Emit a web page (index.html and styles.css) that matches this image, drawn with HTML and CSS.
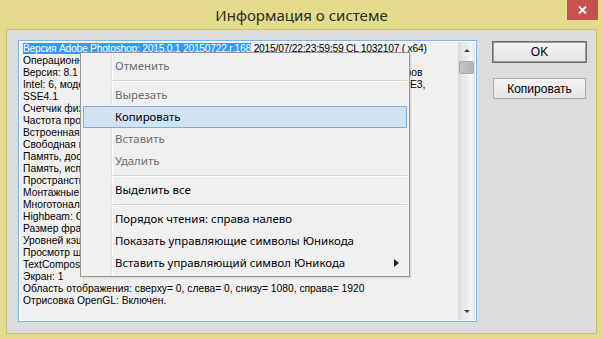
FILE: index.html
```html
<!DOCTYPE html>
<html lang="ru">
<head>
    <meta charset="UTF-8">
    <title>Информация о системе</title>
    <link rel="stylesheet" href="styles.css">
</head>
<body>
    <div class="window">
        <div class="titlebar">
            <span class="title">Информация о системе</span>
            <div class="close-btn">
                <svg width="9" height="8" viewBox="0 0 9 8"><path d="M1 0.5 L8 7.5 M8 0.5 L1 7.5" stroke="#fff" stroke-width="1.8"/></svg>
            </div>
        </div>

        <div class="client">
            <!-- Info text box -->
            <div class="infobox">
                <div class="info-text">
                    <div class="line line-tight"><span class="sel">Версия Adobe Photoshop: 2015.0.1 20150722.r.168</span> 2015/07/22:23:59:59 CL 1032107 ( x64)</div>
                    <div class="line">Операционная система: Windows 8 64-разрядная</div>
                    <div class="line">Версия: 8.1 Сведения о системе: GenuineIntel, количество логических процессоров</div>
                    <div class="line">Intel: 6, модель: 58, степпинг: 9 с MMX, SSE (целочисленные), SSE FP, SSE2, SSE3,</div>
                    <div class="line">SSE4.1</div>
                    <div class="line">Счетчик физических процессоров: 4</div>
                    <div class="line">Частота процессора: 3400 МГц</div>
                    <div class="line">Встроенная память: 16335 МБ</div>
                    <div class="line">Свободная память: 11228 МБ</div>
                    <div class="line">Память, доступная для Photoshop: 14663 МБ</div>
                    <div class="line">Память, используемая Photoshop: 70 %</div>
                    <div class="line">Пространство: Отключено.</div>
                    <div class="line">Монтажные области: Включено.</div>
                    <div class="line">Многотональный шум: Отключено.</div>
                    <div class="line">Highbeam: Отключено.</div>
                    <div class="line">Размер фрагмента изображения: 1024K</div>
                    <div class="line">Уровней кэша изображения: 4</div>
                    <div class="line">Просмотр шрифтов: Средний</div>
                    <div class="line">TextComposer: Латинский</div>
                    <div class="line">Экран: 1</div>
                    <div class="line">Область отображения: сверху= 0, слева= 0, снизу= 1080, справа= 1920</div>
                    <div class="line">Отрисовка OpenGL: Включен.</div>
                </div>
                <div class="scrollbar">
                    <div class="sb-btn"><span class="arrow-up"></span></div>
                    <div class="sb-thumb"></div>
                    <div class="sb-track"></div>
                    <div class="sb-btn"><span class="arrow-down"></span></div>
                </div>
            </div>

            <div class="actions">
                <button class="btn btn-default">OK</button>
                <button class="btn btn-copy">Копировать</button>
            </div>
        </div>

        <!-- Context menu -->
        <ul class="context-menu">
            <li class="menu-item disabled">Отменить</li>
            <li class="menu-sep"></li>
            <li class="menu-item disabled">Вырезать</li>
            <li class="menu-item active">Копировать</li>
            <li class="menu-item disabled">Вставить</li>
            <li class="menu-item disabled">Удалить</li>
            <li class="menu-sep"></li>
            <li class="menu-item">Выделить все</li>
            <li class="menu-sep"></li>
            <li class="menu-item">Порядок чтения: справа налево</li>
            <li class="menu-item">Показать управляющие символы Юникода</li>
            <li class="menu-item">Вставить управляющий символ Юникода<span class="sub-arrow"></span></li>
        </ul>
    </div>
</body>
</html>
```

FILE: styles.css
```css
* {
    margin: 0;
    padding: 0;
    box-sizing: border-box;
}

body {
    width: 603px;
    height: 339px;
    overflow: hidden;
    background: #e4dc8c;
    font-family: 'Liberation Sans', Arial, sans-serif;
}

.window {
    position: relative;
    width: 603px;
    height: 339px;
    background: #e4dc8c;
    padding: 0 6px 5px;
    display: flex;
    flex-direction: column;
}

.titlebar {
    height: 29px;
    flex-shrink: 0;
    display: grid;
    grid-template-columns: 1fr auto 1fr;
}

.title {
    grid-column: 2;
    font-family: 'Noto Sans', sans-serif;
    font-size: 15px;
    line-height: 30px;
    color: #2b2b2b;
    white-space: nowrap;
}

.close-btn {
    grid-column: 3;
    justify-self: end;
    width: 31px;
    height: 20px;
    margin-right: -1px;
    background: #c75050;
    display: flex;
    align-items: center;
    justify-content: center;
}

.client {
    flex: 1;
    background: #dcdcdc;
    border: 1px solid #c9c17b;
    display: flex;
    align-items: flex-start;
    padding: 10px 0 0 11px;
}

.infobox {
    width: 459px;
    height: 282px;
    border: 1px solid #7eb4ea;
    background: #fff;
    padding: 1px;
    display: flex;
}

.info-text {
    flex: 1;
    background: #f0f0f0;
    padding: 1px 0 0 3px;
    overflow: hidden;
    font-size: 10.3px;
    line-height: 12px;
    color: #000;
    white-space: nowrap;
}

.line {
    height: 12px;
}

.line-tight {
    letter-spacing: -0.25px;
}

.sel {
    background: #3399ff;
    color: #fff;
}

.scrollbar {
    width: 17px;
    display: flex;
    flex-direction: column;
    background: linear-gradient(to right, #d6d6d6 0%, #e6e6e6 25%, #ececec 55%, #f7f7f7 75%, #e4e4e4 100%);
}

.sb-btn {
    height: 17px;
    display: flex;
    align-items: center;
    justify-content: center;
}

.arrow-up {
    width: 0;
    height: 0;
    border-left: 3px solid transparent;
    border-right: 3px solid transparent;
    border-bottom: 3px solid #444;
}

.arrow-down {
    width: 0;
    height: 0;
    border-left: 3px solid transparent;
    border-right: 3px solid transparent;
    border-top: 3px solid #444;
}

.sb-thumb {
    height: 13px;
    margin: 2px 1px 0;
    background: linear-gradient(to right, #c4c4c4, #b6b6b6);
    border: 1px solid #a9a9a9;
    border-radius: 2px;
}

.sb-track {
    flex: 1;
}

.actions {
    width: 95px;
    margin: 1px 0 0 15px;
    display: flex;
    flex-direction: column;
    align-items: center;
    gap: 15px;
}

.btn {
    font-family: 'Liberation Sans', Arial, sans-serif;
    font-size: 12px;
    color: #000;
    background: linear-gradient(#f4f4f4, #e4e4e4);
    border: 1px solid #acacac;
    border-radius: 0;
}

.btn-default {
    width: 95px;
    height: 22px;
    border-color: #6f6f6f;
    box-shadow: inset 0 0 0 1px #9a9a9a;
}

.btn-copy {
    width: 93px;
    height: 21px;
}

.context-menu {
    position: absolute;
    left: 80px;
    top: 52px;
    width: 330px;
    list-style: none;
    padding: 2px;
    border: 1px solid #979797;
    background: linear-gradient(to right, transparent 30px, #e2e3e3 30px, #e2e3e3 31px, #fff 31px, #fff 32px, transparent 32px), #f0f0f0;
    box-shadow: 1px 1px 2px rgba(0, 0, 0, 0.15);
    font-family: 'Noto Sans', sans-serif;
    font-size: 11.4px;
    color: #000;
}

.menu-item {
    height: 22px;
    line-height: 20px;
    padding-left: 31px;
    border: 1px solid transparent;
    display: flex;
    align-items: center;
    white-space: nowrap;
}

.menu-item.disabled {
    color: #6d6d6d;
}

.menu-item.active {
    background: #d1e2f2;
    border-color: #78aee5;
}

.menu-sep {
    height: 2px;
    margin: 3px 0 2px 28px;
    border-top: 1px solid #d7d7d7;
    border-bottom: 1px solid #fff;
}

.sub-arrow {
    margin-left: auto;
    margin-right: 7px;
    width: 0;
    height: 0;
    border-top: 4px solid transparent;
    border-bottom: 4px solid transparent;
    border-left: 5px solid #222;
}
```
